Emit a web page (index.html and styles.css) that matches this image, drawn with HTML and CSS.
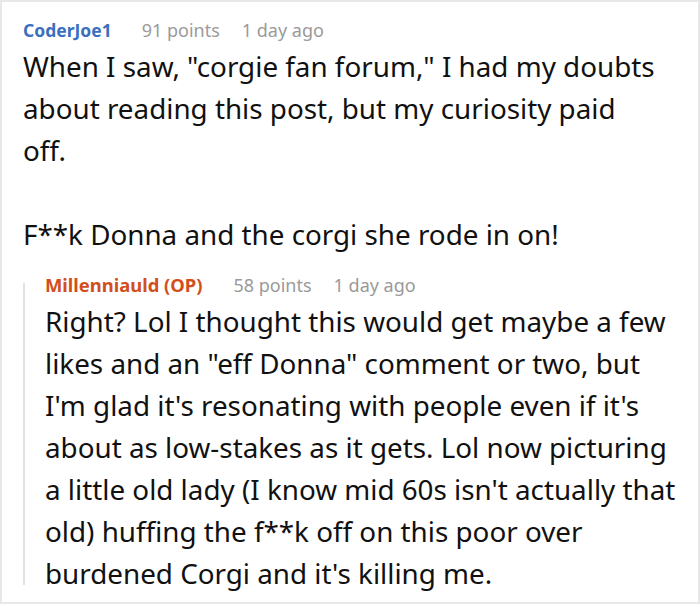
FILE: index.html
```html
<!DOCTYPE html>
<html>
<head>
<meta charset="utf-8">
<link rel="stylesheet" href="styles.css">
</head>
<body>
<div class="thread">
  <div class="comment">
    <div class="meta">
      <span class="author author-blue">CoderJoe1</span>
      <span class="info">91 points</span>
      <span class="info">1 day ago</span>
    </div>
    <div class="body main-body">
      <p>When I saw, "corgie fan forum," I had my doubts about reading this post, but my curiosity paid off.</p>
      <p>F**k Donna and the corgi she rode in on!</p>
    </div>
    <div class="reply">
      <div class="meta">
        <span class="author author-orange">Millenniauld (OP)</span>
        <span class="info">58 points</span>
        <span class="info">1 day ago</span>
      </div>
      <div class="body reply-body">
        <p>Right? Lol I thought this would get maybe a few likes and an "eff Donna" comment or two, but I'm glad it's resonating with people even if it's about as low-stakes as it gets. Lol now picturing a little old lady (I know mid 60s isn't actually that old) huffing the f**k off on this poor over burdened Corgi and it's killing me.</p>
      </div>
    </div>
  </div>
</div>
</body>
</html>
```
FILE: styles.css
```css
html, body {
  margin: 0;
  padding: 0;
  background: #fff;
}
.thread {
  width: 700px;
  height: 604px;
  box-sizing: border-box;
  border: 2px solid #e8e8e8;
  overflow: hidden;
  font-family: "Noto Sans", "Open Sans", sans-serif;
  color: #111;
}
.comment {
  padding: 16px 0 0 21px;
}
.meta {
  display: flex;
  align-items: baseline;
  font-size: 18px;
  line-height: 24px;
}
.author {
  font-weight: 700;
}
.info {
  color: #9a9a9a;
  margin-right: 22px;
}
.author-blue {
  color: #3a6fbf;
  font-size: 17.5px;
  margin-right: 30px;
}
.author-orange {
  color: #d24f1c;
  font-size: 18.4px;
  margin-right: 31px;
}
.body {
  font-size: 27.8px;
  line-height: 42px;
  margin-top: 3px;
}
.main-body {
  padding-right: 38px;
}
.body p {
  margin: 0 0 42px;
}
.body p:last-child { margin-bottom: 0; }
.reply {
  display: flex;
  flex-direction: column;
  margin-top: 28px;
  border-left: 2px solid #e2e2e2;
  padding-left: 20px;
  padding-right: 22px;
}
.reply .meta {
  margin-top: -10px;
}
.reply-body {
  margin-top: 3px;
  margin-bottom: -9px;
}
```
